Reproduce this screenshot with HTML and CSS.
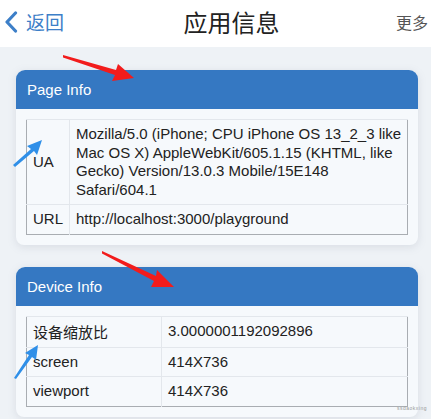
FILE: index.html
```html
<!DOCTYPE html>
<html lang="zh">
<head>
<meta charset="utf-8">
<title>应用信息</title>
<link rel="stylesheet" href="styles.css">
</head>
<body>
<div class="page">
  <header class="nav">
    <a class="back">
      <svg class="chev" width="14" height="22" viewBox="0 0 14 22"><path d="M11.5 2 L3 11 L11.5 20" fill="none" stroke="#3d7fc8" stroke-width="3.2" stroke-linecap="round" stroke-linejoin="round"/></svg>
      <span>返回</span>
    </a>
    <h1 class="title">应用信息</h1>
    <span class="more">更多</span>
  </header>
  <main class="main">
    <section class="card">
      <div class="card-head">Page Info</div>
      <div class="card-body">
        <table class="info t1">
          <tr><td class="k">UA</td><td class="v">Mozilla/5.0 (iPhone; CPU iPhone OS 13_2_3 like Mac OS X) AppleWebKit/605.1.15 (KHTML, like Gecko) Version/13.0.3 Mobile/15E148 Safari/604.1</td></tr>
          <tr><td class="k">URL</td><td class="v">http://localhost:3000/playground</td></tr>
        </table>
      </div>
    </section>
    <section class="card">
      <div class="card-head">Device Info</div>
      <div class="card-body">
        <table class="info t2">
          <tr class="r1"><td class="k">设备缩放比</td><td class="v">3.0000001192092896</td></tr>
          <tr><td class="k">screen</td><td class="v">414X736</td></tr>
          <tr><td class="k">viewport</td><td class="v">414X736</td></tr>
        </table>
      </div>
    </section>
  </main>
  <div class="mark">ssdaokxing</div>
  <svg class="arrows" width="431" height="419" viewBox="0 0 431 419">
    <polygon fill="#f21c1c" points="63,55 116,70 118,64 134,78 112,81 115,75 63,57.5"/>
    <polygon fill="#f21c1c" points="102,251 156,276 157,270 174,287 151,287 154,281 102,253.5"/>
    <polygon fill="#2f8fe8" points="13,165 31,149 27,146 42,140 37,155 34,151 15,167"/>
    <polygon fill="#2f8fe8" points="14,378 29,355 25,353 38,345 36,360 32,357 16,379"/>
  </svg>
</div>
</body>
</html>
```
FILE: styles.css
```css
html, body {
  margin: 0;
  padding: 0;
}
body {
  background: #eef2f6;
  font-family: "Liberation Sans", Arial, "Noto Sans CJK SC", sans-serif;
  color: #222;
}
.page {
  position: relative;
  width: 431px;
  height: 419px;
  overflow: hidden;
}
.nav {
  height: 47px;
  background: #fff;
  display: flex;
  align-items: center;
  justify-content: space-between;
  padding: 0 3px 0 4px;
  position: relative;
}
.back {
  display: flex;
  align-items: center;
  gap: 8px;
  color: #3d7fc8;
  font-family: "Noto Sans CJK SC", sans-serif;
  font-size: 19px;
  margin-top: -4px;
}
.chev {
  display: block;
}
.title {
  position: absolute;
  left: 32px;
  right: 0;
  top: 0;
  margin: 0;
  text-align: center;
  font-family: "Noto Sans CJK SC", sans-serif;
  font-weight: normal;
  font-size: 24px;
  line-height: 43px;
  color: #222;
  pointer-events: none;
}
.more {
  font-family: "Noto Sans CJK SC", sans-serif;
  font-size: 16px;
  color: #555;
  margin-top: -4px;
}
.main {
  padding: 23px 13px 0 16px;
  display: flex;
  flex-direction: column;
  gap: 22px;
}
.card {
  background: #f6f9fc;
  border-radius: 9px 9px 8px 8px;
  box-shadow: 0 2px 8px rgba(120, 130, 150, 0.18);
}
.card-head {
  height: 39px;
  background: #3578c2;
  color: #fff;
  border-radius: 9px 9px 0 0;
  font-size: 15px;
  line-height: 39px;
  padding-left: 11px;
}
.card-body {
  padding: 10px;
}
.info {
  width: 100%;
  border-collapse: collapse;
  border: 1px solid #a9adb2;
  font-size: 15px;
  line-height: 18.5px;
  color: #222;
}
.info td {
  border-top: 1px solid #e3e7ec;
  padding: 5px 5px 5px 6px;
  vertical-align: middle;
}
.info td.k {
  border-right: 1px solid #e3e7ec;
}
.t1 td.k {
  width: 31px;
}
.t2 td.k {
  width: 123px;
}
.t2 .r1 td {
  padding-top: 5px;
  padding-bottom: 5px;
}
.t2 .r1 td.k {
  font-family: "Noto Sans CJK SC", sans-serif;
  line-height: 20px;
}
.mark {
  position: absolute;
  right: 4px;
  bottom: 8px;
  font-size: 5px;
  color: #999;
  letter-spacing: 0.5px;
}
.arrows {
  position: absolute;
  left: 0;
  top: 0;
  pointer-events: none;
}
```
